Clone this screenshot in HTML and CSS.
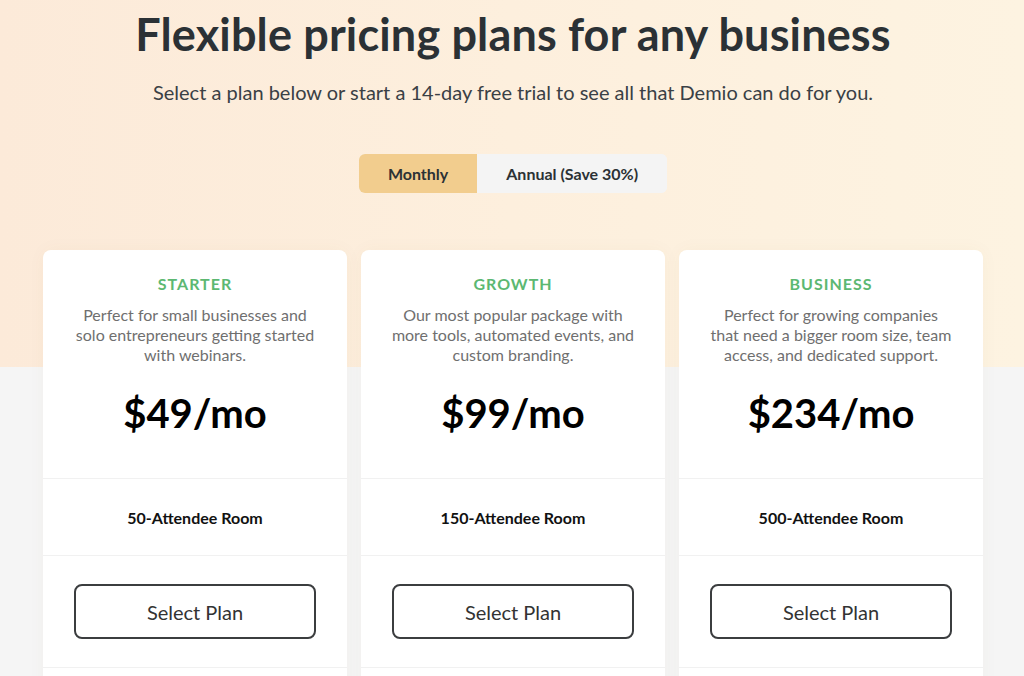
FILE: index.html
```html
<!DOCTYPE html>
<html lang="en">
<head>
<meta charset="utf-8">
<title>Demio Pricing</title>
<link rel="stylesheet" href="styles.css">
</head>
<body>
<div class="page">
  <header class="hero">
    <h1 class="title">Flexible pricing plans for any business</h1>
    <p class="subtitle">Select a plan below or start a 14-day free trial to see all that Demio can do for you.</p>
    <div class="toggle">
      <button class="toggle-btn active">Monthly</button>
      <button class="toggle-btn">Annual (Save 30%)</button>
    </div>
  </header>
  <section class="plans">
    <div class="card">
      <div class="card-head">
        <div class="plan-name">STARTER</div>
        <p class="plan-desc">Perfect for small businesses and solo entrepreneurs getting started with webinars.</p>
        <div class="price">$49/mo</div>
      </div>
      <div class="card-row">50-Attendee Room</div>
      <div class="card-action"><button class="select-btn">Select Plan</button></div>
      <div class="card-foot"></div>
    </div>
    <div class="card">
      <div class="card-head">
        <div class="plan-name">GROWTH</div>
        <p class="plan-desc">Our most popular package with more tools, automated events, and custom branding.</p>
        <div class="price">$99/mo</div>
      </div>
      <div class="card-row">150-Attendee Room</div>
      <div class="card-action"><button class="select-btn">Select Plan</button></div>
      <div class="card-foot"></div>
    </div>
    <div class="card">
      <div class="card-head">
        <div class="plan-name">BUSINESS</div>
        <p class="plan-desc">Perfect for growing companies that need a bigger room size, team access, and dedicated support.</p>
        <div class="price">$234/mo</div>
      </div>
      <div class="card-row">500-Attendee Room</div>
      <div class="card-action"><button class="select-btn">Select Plan</button></div>
      <div class="card-foot"></div>
    </div>
  </section>
</div>
</body>
</html>
```
FILE: styles.css
```css
html, body {
  margin: 0;
  padding: 0;
}
body {
  font-family: Lato, "Open Sans", "Liberation Sans", sans-serif;
  color: #2b3135;
  background: #f5f5f5;
}
.page {
  min-height: 676px;
  padding-left: 2px;
  background-color: #f5f5f5;
  background-image: linear-gradient(to right, #fcead9 0%, #fdefdd 50%, #fdf3e1 100%);
  background-size: 100% 367px;
  background-repeat: no-repeat;
  overflow: hidden;
}
.hero {
  display: flex;
  flex-direction: column;
  align-items: center;
  padding-top: 7px;
}
.title {
  margin: 0;
  font-size: 45px;
  line-height: 54px;
  font-weight: 700;
  letter-spacing: 0.15px;
  color: #2b3135;
}
.subtitle {
  margin: 19px 0 0;
  font-size: 20px;
  line-height: 24px;
  color: #3a4045;
}
.toggle {
  display: flex;
  margin-top: 50px;
  border-radius: 6px;
  overflow: hidden;
  background: #f4f4f4;
}
.toggle-btn {
  border: 0;
  margin: 0;
  height: 39px;
  padding: 0 29px;
  font-family: inherit;
  font-size: 16px;
  font-weight: 700;
  color: #2b3135;
  background: #f4f4f4;
}
.toggle-btn.active {
  background: #f2cd8e;
}
.plans {
  display: flex;
  justify-content: center;
  gap: 14px;
  margin-top: 57px;
}
.card {
  width: 304px;
  background: #ffffff;
  border-radius: 8px;
  box-shadow: 0 0 18px rgba(120, 90, 60, 0.04);
  text-align: center;
}
.card-head {
  padding: 24px 30px 41px;
  border-bottom: 1px solid #f1f1f1;
}
.plan-name {
  font-size: 16px;
  line-height: 20px;
  font-weight: 700;
  letter-spacing: 1px;
  color: #5cb872;
}
.plan-desc {
  margin: 11px 0 0;
  font-size: 16px;
  line-height: 20px;
  color: #6f6f6f;
}
.price {
  margin-top: 24px;
  font-size: 40px;
  line-height: 48px;
  font-weight: 700;
  color: #000000;
}
.card-row {
  height: 76px;
  display: flex;
  align-items: center;
  justify-content: center;
  font-size: 16px;
  font-weight: 700;
  color: #111111;
  border-bottom: 1px solid #f1f1f1;
}
.card-action {
  padding: 28px 0;
  display: flex;
  justify-content: center;
  border-bottom: 1px solid #f1f1f1;
}
.select-btn {
  width: 242px;
  height: 55px;
  border: 2px solid #3b3d3f;
  border-radius: 8px;
  background: #ffffff;
  font-family: inherit;
  font-size: 20px;
  color: #333333;
}
.card-foot {
  height: 60px;
}
```
